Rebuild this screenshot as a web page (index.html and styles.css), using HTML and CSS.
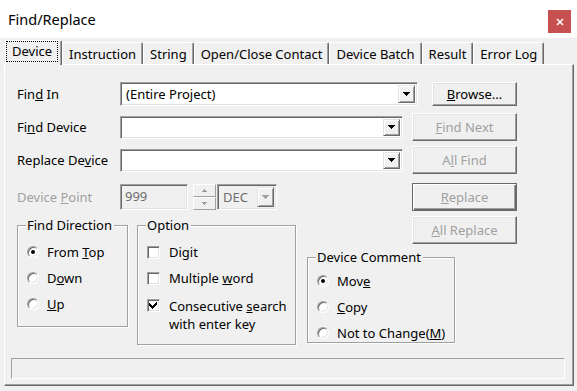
FILE: index.html
```html
<!DOCTYPE html>
<html>
<head>
<meta charset="utf-8">
<title>Find/Replace</title>
<link rel="stylesheet" href="styles.css">
</head>
<body>
<div class="window">
  <div class="titlebar">
    <span class="title">Find/Replace</span>
    <span class="close"><svg width="8" height="8" viewBox="0 0 8 8"><path d="M1 1L7 7M7 1L1 7" stroke="#fff" stroke-width="1.5"/></svg></span>
  </div>
  <div class="client">
    <div class="tabs">
      <div class="tab active"><span class="focus">Device</span></div>
      <div class="tab">Instruction</div>
      <div class="tab">String</div>
      <div class="tab">Open/Close Contact</div>
      <div class="tab">Device Batch</div>
      <div class="tab">Result</div>
      <div class="tab">Error Log</div>
    </div>
    <div class="panel">
      <div class="form">
        <div class="row r1">
          <span class="lbl">Fin<u>d</u> In</span>
          <div class="combo w-wide"><span class="val">(Entire Project)</span><span class="drop"><svg width="7" height="4" viewBox="0 0 7 4" shape-rendering="crispEdges"><path d="M0 0h7v1h-1v1h-1v1h-1v1h-1v-1h-1v-1h-1v-1h-1z" fill="#000"/></svg></span></div>
          <div class="btn browse"><span><u>B</u>rowse...</span></div>
        </div>
        <div class="row r2">
          <span class="lbl">Fi<u>n</u>d Device</span>
          <div class="combo w-std"><span class="val"></span><span class="drop"><svg width="7" height="4" viewBox="0 0 7 4" shape-rendering="crispEdges"><path d="M0 0h7v1h-1v1h-1v1h-1v1h-1v-1h-1v-1h-1v-1h-1z" fill="#000"/></svg></span></div>
          <div class="btn dis"><span><u>F</u>ind Next</span></div>
        </div>
        <div class="row r3">
          <span class="lbl">Replace De<u>v</u>ice</span>
          <div class="combo w-std"><span class="val"></span><span class="drop"><svg width="7" height="4" viewBox="0 0 7 4" shape-rendering="crispEdges"><path d="M0 0h7v1h-1v1h-1v1h-1v1h-1v-1h-1v-1h-1v-1h-1z" fill="#000"/></svg></span></div>
          <div class="btn dis"><span>A<u>l</u>l Find</span></div>
        </div>
        <div class="row r4">
          <span class="lbl dis">Device <u>P</u>oint</span>
          <div class="edit dis-field">999</div>
          <div class="spin">
            <span class="spin-btn"><svg width="5" height="3" viewBox="0 0 5 3" shape-rendering="crispEdges"><path d="M2 0h1v1h1v1h1v1h-5v-1h1v-1h1z" fill="#a0a0a0"/></svg></span>
            <span class="spin-btn"><svg width="5" height="3" viewBox="0 0 5 3" shape-rendering="crispEdges"><path d="M0 0h5v1h-1v1h-1v1h-1v-1h-1v-1h-1z" fill="#a0a0a0"/></svg></span>
          </div>
          <div class="combo w-dec dis-field"><span class="val">DEC</span><span class="drop"><svg width="7" height="4" viewBox="0 0 7 4" shape-rendering="crispEdges"><path d="M0 0h7v1h-1v1h-1v1h-1v1h-1v-1h-1v-1h-1v-1h-1z" fill="#a0a0a0"/></svg></span></div>
          <div class="btn dis default"><span><u>R</u>eplace</span></div>
        </div>
        <div class="bottom">
          <fieldset class="group g-dir">
            <legend>Find Direction</legend>
            <div class="opt-row"><span class="radio on"></span><span>From <u>T</u>op</span></div>
            <div class="opt-row"><span class="radio"></span><span>D<u>o</u>wn</span></div>
            <div class="opt-row"><span class="radio"></span><span><u>U</u>p</span></div>
          </fieldset>
          <fieldset class="group g-opt">
            <legend>Option</legend>
            <div class="opt-row"><span class="check"></span><span>Di<u>g</u>it</span></div>
            <div class="opt-row"><span class="check"></span><span>Multiple <u>w</u>ord</span></div>
            <div class="opt-row two"><span class="check"><svg width="9" height="9" viewBox="0 0 9 9" shape-rendering="crispEdges"><path d="M7 1h1v3h-1v1h-1v1h-1v1h-1v1h-1v-1h-1v-1h-1v-1h-1v-3h1v1h1v1h1v1h1v-1h1v-1h1v-1h1z" fill="#000"/></svg></span><span>Consecutive <u>s</u>earch<br>with enter key</span></div>
          </fieldset>
          <div class="rightcol">
            <div class="btn dis"><span><u>A</u>ll Replace</span></div>
            <fieldset class="group g-cmt">
              <legend>Device Comment</legend>
              <div class="opt-row"><span class="radio on"></span><span>Mov<u>e</u></span></div>
              <div class="opt-row"><span class="radio"></span><span><u>C</u>opy</span></div>
              <div class="opt-row"><span class="radio"></span><span>Not to Change(<u>M</u>)</span></div>
            </fieldset>
          </div>
        </div>
      </div>
      <div class="statusbar"></div>
    </div>
  </div>
</div>
</body>
</html>
```
FILE: styles.css
```css
* { box-sizing: border-box; }
html, body { margin: 0; padding: 0; }
body {
  width: 577px;
  height: 391px;
  overflow: hidden;
  background: #f0f0f0;
  font-family: "Noto Sans", "Open Sans", sans-serif;
  font-size: 13px;
  color: #000;
}
u { text-underline-offset: 1px; }

.window { width: 577px; height: 391px; display: flex; flex-direction: column; }

.titlebar {
  height: 38px;
  flex: none;
  background: #fff;
  display: flex;
  justify-content: space-between;
  align-items: flex-start;
  padding: 0 6px 0 8px;
}
.title { font-size: 14.5px; line-height: 20px; margin-top: 9px; }
.close {
  width: 23px;
  height: 23px;
  margin-top: 10px;
  background: #c75050;
  display: flex;
  align-items: center;
  justify-content: center;
}

.client { flex: 1; padding: 2px 3px 0 4px; display: flex; flex-direction: column; }

.tabs {
  display: flex;
  align-items: flex-end;
  height: 24px;
  padding-left: 1px;
  position: relative;
  z-index: 1;
}
.tab {
  height: 22px;
  padding: 2px 6px 0 6px;
  line-height: 18px;
  border: 1px solid #fff;
  border-bottom: none;
  border-right-color: #696969;
  box-shadow: inset -1px 0 #a0a0a0;
  border-radius: 2px 2px 0 0;
  white-space: nowrap;
}
.tab.active {
  height: 25px;
  margin-bottom: -1px;
  padding: 0;
  background: #f0f0f0;
}
.focus {
  display: block;
  margin: 0 3px 3px 0;
  padding: 0 5px;
  line-height: 19px;
  border: 1px dotted #000;
}

.panel {
  flex: none;
  height: 322px;
  border: 1px solid;
  border-color: #fff #696969 #696969 #fff;
  box-shadow: inset -1px -1px #a0a0a0;
  padding: 17px 0 0 6px;
  display: flex;
  flex-direction: column;
}
.form { width: 506px; padding-left: 6px; }

.row { display: flex; align-items: center; }
.r1 { height: 24px; }
.r2 { height: 28px; margin-top: 7px; }
.r3 { height: 28px; margin-top: 5px; }
.r4 { height: 28px; margin-top: 9px; }
.lbl { width: 103px; flex: none; white-space: nowrap; }
.dis, .btn.dis { color: #a0a0a0; }

.combo {
  height: 23px;
  background: #fff;
  border: 1px solid;
  border-color: #a0a0a0 #fff #fff #a0a0a0;
  box-shadow: inset 1px 1px #696969, inset -1px -1px #e3e3e3;
  display: flex;
  align-items: center;
  padding: 2px;
  flex: none;
}
.r1 .combo { height: 24px; }
.w-wide { width: 298px; }
.w-std { width: 283px; }
.w-dec { width: 60px; height: 26px; margin-left: 1px; }
.combo .val { flex: 1; padding-left: 3px; white-space: nowrap; }
.drop {
  width: 17px;
  align-self: stretch;
  border: 1px solid;
  border-color: #e3e3e3 #696969 #696969 #e3e3e3;
  box-shadow: inset 1px 1px #fff, inset -1px -1px #a0a0a0;
  background: #f0f0f0;
  display: flex;
  align-items: center;
  justify-content: center;
}
.drop svg { display: block; }
.dis-field { background: #f0f0f0; color: #6d6d6d; }

.edit {
  width: 68px;
  height: 26px;
  border: 1px solid;
  border-color: #a0a0a0 #fff #fff #a0a0a0;
  box-shadow: inset 1px 1px #696969, inset -1px -1px #e3e3e3;
  padding: 2px 0 0 4px;
  line-height: 18px;
  flex: none;
}
.spin { width: 23px; height: 26px; margin-left: 5px; display: flex; flex-direction: column; flex: none; }
.spin-btn {
  flex: 1;
  border: 1px solid;
  border-color: #fff #a0a0a0 #a0a0a0 #fff;
  display: flex;
  align-items: center;
  justify-content: center;
}
.spin-btn svg { display: block; }

.btn {
  width: 105px;
  height: 28px;
  margin-left: auto;
  flex: none;
  border: 1px solid;
  border-color: #fff #696969 #696969 #fff;
  box-shadow: inset -1px -1px #a0a0a0, inset 1px 1px #e3e3e3;
  display: flex;
  align-items: center;
  justify-content: center;
  white-space: nowrap;
}
.btn.browse { width: 85px; height: 24px; }
.btn.default {
  border-color: #696969;
  box-shadow: inset 1px 1px #fff, inset -1px -1px #696969, inset -2px -2px #a0a0a0;
}

.bottom { display: flex; align-items: flex-start; margin-top: 5px; }
.group {
  margin: 0;
  min-width: 0;
  border: 1px solid #a0a0a0;
  box-shadow: inset 1px 1px #fff, 1px 1px #fff;
  padding: 0 0 0 9px;
}
.group legend {
  padding: 0 2px 0 1px;
  margin-left: -1px;
  line-height: 15px;
  background: #f0f0f0;
  white-space: nowrap;
}
.g-dir { width: 111px; height: 109px; margin-top: 2px; padding-top: 6px; }
.g-opt { width: 159px; height: 127px; margin-left: 9px; margin-top: 2px; padding-top: 6px; }
.rightcol { margin-left: 11px; width: 210px; display: flex; flex-direction: column; }
.rightcol .btn { align-self: flex-end; }
.g-cmt { width: 148px; height: 93px; margin-top: 6px; padding-top: 3px; }

.opt-row { display: flex; align-items: center; height: 26px; white-space: nowrap; }
.opt-row.two { align-items: flex-start; height: 44px; padding-top: 6px; line-height: 18px; }
.opt-row.two .check { margin-top: 2px; }

.radio {
  width: 12px;
  height: 12px;
  flex: none;
  border-radius: 50%;
  background: #fff;
  border: 1px solid;
  border-color: #a0a0a0 #fff #fff #a0a0a0;
  box-shadow: inset 1px 1px #696969, inset -1px -1px #e3e3e3;
  margin-right: 8px;
  display: flex;
  align-items: center;
  justify-content: center;
}
.radio.on::after {
  content: "";
  width: 4px;
  height: 4px;
  border-radius: 50%;
  background: #000;
}
.check {
  width: 13px;
  height: 13px;
  flex: none;
  background: #fff;
  border: 1px solid;
  border-color: #a0a0a0 #fff #fff #a0a0a0;
  box-shadow: inset 1px 1px #696969, inset -1px -1px #e3e3e3;
  margin-right: 9px;
  display: flex;
  align-items: center;
  justify-content: center;
}
.check svg { display: block; }

.statusbar {
  width: 554px;
  height: 21px;
  margin-top: 13px;
  border: 1px solid;
  border-color: #a0a0a0 #fff #fff #a0a0a0;
}
```
